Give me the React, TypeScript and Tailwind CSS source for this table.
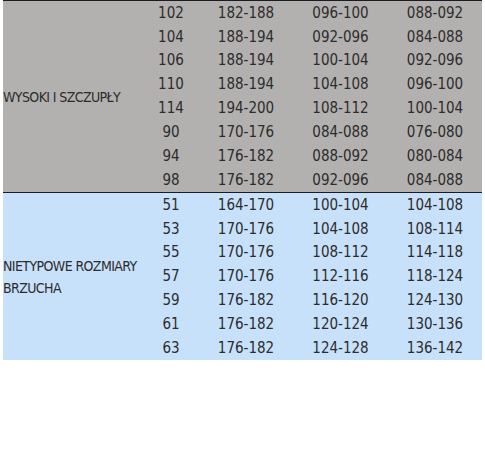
const tall = [
  ["102", "182-188", "096-100", "088-092"],
  ["104", "188-194", "092-096", "084-088"],
  ["106", "188-194", "100-104", "092-096"],
  ["110", "188-194", "104-108", "096-100"],
  ["114", "194-200", "108-112", "100-104"],
  ["90", "170-176", "084-088", "076-080"],
  ["94", "176-182", "088-092", "080-084"],
  ["98", "176-182", "092-096", "084-088"],
];

const belly = [
  ["51", "164-170", "100-104", "104-108"],
  ["53", "170-176", "104-108", "108-114"],
  ["55", "170-176", "108-112", "114-118"],
  ["57", "170-176", "112-116", "118-124"],
  ["59", "176-182", "116-120", "124-130"],
  ["61", "176-182", "120-124", "130-136"],
  ["63", "176-182", "124-128", "136-142"],
];

function Group({ label, rows, className }: { label: React.ReactNode; rows: string[][]; className: string }) {
  return (
    <div className={`flex border-t border-[#1b1b24] ${className}`}>
      <div className="w-[140px] shrink-0 flex items-center leading-[22px] text-[14px] tracking-[-0.6px] whitespace-nowrap">
        <span>{label}</span>
      </div>
      <div className="flex-1 flex flex-col">
        {rows.map((r, i) => (
          <div key={i} className="flex-1 flex items-center">
            <span className="w-[56px] text-center">{r[0]}</span>
            <span className="w-[94px] text-center">{r[1]}</span>
            <span className="w-[95px] text-center">{r[2]}</span>
            <span className="w-[94px] text-center">{r[3]}</span>
          </div>
        ))}
      </div>
    </div>
  );
}

export default function App() {
  return (
    <div className="w-[485px] h-[456px] bg-white">
      <div className="ml-[3px] w-[479px] font-['DejaVu_Sans_Condensed',sans-serif] text-[15px] text-[#2c2c2c]">
        <Group label="WYSOKI I SZCZUPŁY" rows={tall} className="h-[192px] bg-[#b3b1af]" />
        <Group
          label={
            <>
              NIETYPOWE ROZMIARY
              <br />
              BRZUCHA
            </>
          }
          rows={belly}
          className="h-[168px] bg-[#c8e1fb]"
        />
      </div>
    </div>
  );
}
